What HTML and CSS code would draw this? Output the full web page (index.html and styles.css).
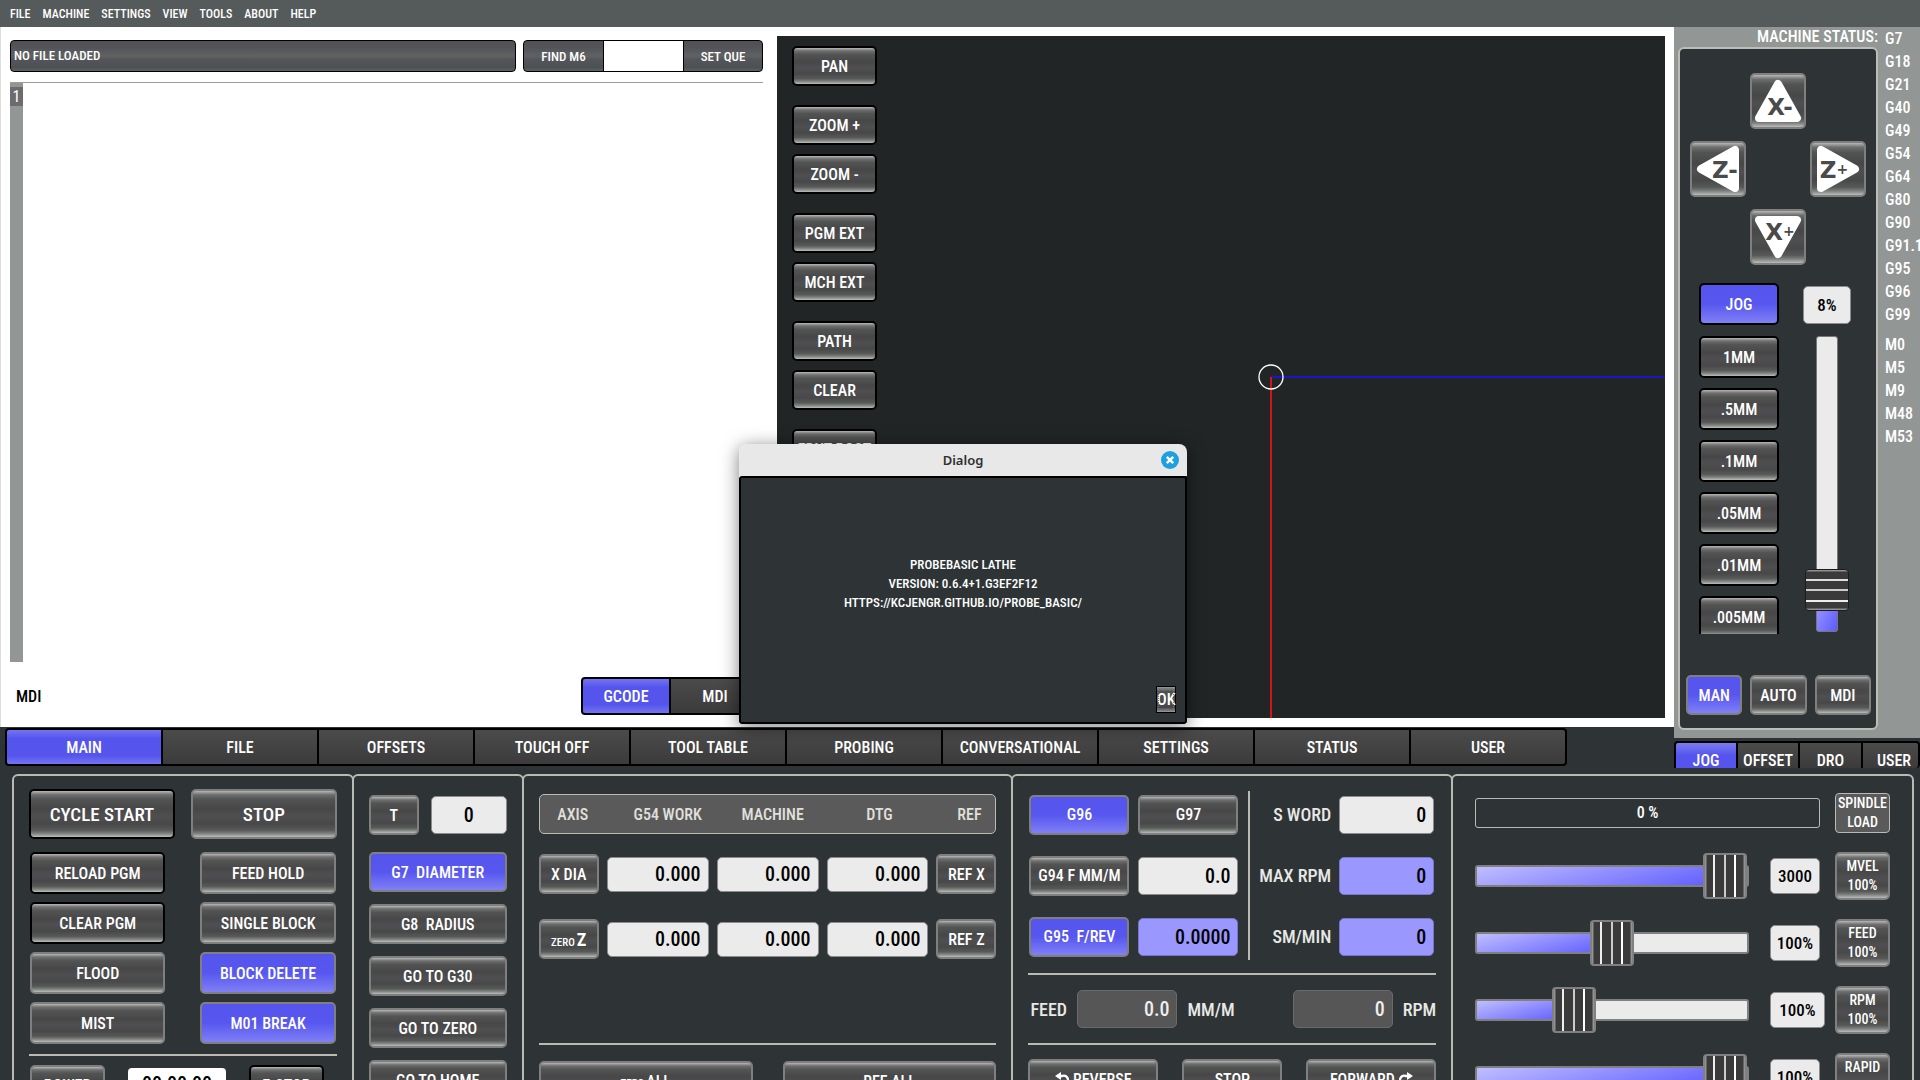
FILE: index.html
```html
<!DOCTYPE html>
<html lang="en">
<head>
    <meta charset="UTF-8">
    <meta name="viewport" content="width=device-width, initial-scale=1.0">
    <title>ProbeBasic Lathe</title>
    <link rel="stylesheet" href="styles.css">
</head>
<body>
    <nav class="menu-bar">
        <a href="#">FILE</a>
        <a href="#">MACHINE</a>
        <a href="#">SETTINGS</a>
        <a href="#">VIEW</a>
        <a href="#">TOOLS</a>
        <a href="#">ABOUT</a>
        <a href="#">HELP</a>
    </nav>

    <main class="upper">
        <div class="left-side">
            <div class="workspace">
                <section class="editor">
                    <div class="file-row">
                        <div class="file-name">NO FILE LOADED</div>
                        <div class="find-group">
                            <button type="button">FIND M6</button>
                            <input type="text" aria-label="Tool number">
                            <button type="button">SET QUE</button>
                        </div>
                    </div>
                    <div class="code-view">
                        <div class="gutter"><span>1</span></div>
                    </div>
                    <div class="mdi-row">
                        <label for="mdi">MDI</label>
                        <input type="text" id="mdi" class="mdi-input">
                        <div class="mode-switch">
                            <button type="button" class="active">GCODE</button>
                            <button type="button">MDI</button>
                        </div>
                    </div>
                </section>

                <section class="plot">
                    <div class="plot-buttons">
                        <button type="button" class="btn dark">PAN</button>
                        <button type="button" class="btn dark group-start">ZOOM +</button>
                        <button type="button" class="btn dark">ZOOM -</button>
                        <button type="button" class="btn dark group-start">PGM EXT</button>
                        <button type="button" class="btn dark">MCH EXT</button>
                        <button type="button" class="btn dark group-start">PATH</button>
                        <button type="button" class="btn dark">CLEAR</button>
                        <button type="button" class="btn dark group-start">FRNT POST</button>
                    </div>
                    <svg class="axes" viewBox="0 0 788 682" preserveAspectRatio="xMidYMid slice">
                        <line x1="394" y1="341" x2="800" y2="341" stroke="#1717c8" stroke-width="2"/>
                        <line x1="394" y1="341" x2="394" y2="700" stroke="#d01717" stroke-width="2"/>
                        <circle cx="394" cy="341" r="12" fill="none" stroke="#ffffff" stroke-width="1.3"/>
                    </svg>
                </section>
            </div>

            <nav class="main-tabs">
                <button type="button" class="active">MAIN</button>
                <button type="button">FILE</button>
                <button type="button">OFFSETS</button>
                <button type="button">TOUCH OFF</button>
                <button type="button">TOOL TABLE</button>
                <button type="button">PROBING</button>
                <button type="button">CONVERSATIONAL</button>
                <button type="button">SETTINGS</button>
                <button type="button">STATUS</button>
                <button type="button">USER</button>
            </nav>
        </div>

        <aside class="right-side">
            <div class="machine">
                <div class="machine-col">
                    <div class="status-title">MACHINE STATUS:</div>
                    <div class="jog-frame">
                        <div class="jog-pad">
                            <button type="button" class="btn jog-up" aria-label="X minus">
                                <svg viewBox="0 0 52 52">
                                    <path d="M26 9 L45 43 H7 Z" fill="#fff" stroke="#fff" stroke-width="8" stroke-linejoin="round"/>
                                    <text x="28" y="40" class="jog-letter">X-</text>
                                </svg>
                            </button>
                            <button type="button" class="btn jog-left" aria-label="Z minus">
                                <svg viewBox="0 0 52 52">
                                    <path d="M9 26 L43 7 V45 Z" fill="#fff" stroke="#fff" stroke-width="8" stroke-linejoin="round"/>
                                    <text x="33" y="35" class="jog-letter">Z-</text>
                                </svg>
                            </button>
                            <button type="button" class="btn jog-right" aria-label="Z plus">
                                <svg viewBox="0 0 52 52">
                                    <path d="M43 26 L9 7 V45 Z" fill="#fff" stroke="#fff" stroke-width="8" stroke-linejoin="round"/>
                                    <text x="22" y="35" class="jog-letter">Z<tspan class="plus" dy="-4">+</tspan></text>
                                </svg>
                            </button>
                            <button type="button" class="btn jog-down" aria-label="X plus">
                                <svg viewBox="0 0 52 52">
                                    <path d="M26 43 L45 9 H7 Z" fill="#fff" stroke="#fff" stroke-width="8" stroke-linejoin="round"/>
                                    <text x="28" y="29" class="jog-letter">X<tspan class="plus" dy="-4">+</tspan></text>
                                </svg>
                            </button>
                        </div>
                        <div class="jog-steps">
                            <div class="step-list">
                                <button type="button" class="btn dark active">JOG</button>
                                <button type="button" class="btn dark">1MM</button>
                                <button type="button" class="btn dark">.5MM</button>
                                <button type="button" class="btn dark">.1MM</button>
                                <button type="button" class="btn dark">.05MM</button>
                                <button type="button" class="btn dark">.01MM</button>
                                <button type="button" class="btn dark">.005MM</button>
                            </div>
                            <div class="jog-speed">
                                <output class="readout" for="jog-speed">8%</output>
                                <input type="range" id="jog-speed" class="slider-v" min="0" max="100" value="8" aria-label="Jog speed">
                            </div>
                        </div>
                        <div class="mode-row">
                            <button type="button" class="btn active">MAN</button>
                            <button type="button" class="btn">AUTO</button>
                            <button type="button" class="btn">MDI</button>
                        </div>
                    </div>
                </div>
                <ul class="codes">
                    <li>G7</li>
                    <li>G18</li>
                    <li>G21</li>
                    <li>G40</li>
                    <li>G49</li>
                    <li>G54</li>
                    <li>G64</li>
                    <li>G80</li>
                    <li>G90</li>
                    <li>G91.1</li>
                    <li>G95</li>
                    <li>G96</li>
                    <li>G99</li>
                    <li class="m-start">M0</li>
                    <li>M5</li>
                    <li>M9</li>
                    <li>M48</li>
                    <li>M53</li>
                </ul>
            </div>
            <nav class="side-tabs">
                <button type="button" class="active">JOG</button>
                <button type="button">OFFSET</button>
                <button type="button">DRO</button>
                <button type="button">USER</button>
            </nav>
        </aside>
    </main>

    <div class="panels">
        <section class="panel program">
            <div class="cycle-row">
                <button type="button" class="btn dark big">CYCLE START</button>
                <button type="button" class="btn big">STOP</button>
            </div>
            <div class="program-grid">
                <button type="button" class="btn dark">RELOAD PGM</button>
                <button type="button" class="btn">FEED HOLD</button>
                <button type="button" class="btn dark">CLEAR PGM</button>
                <button type="button" class="btn">SINGLE BLOCK</button>
                <button type="button" class="btn">FLOOD</button>
                <button type="button" class="btn active">BLOCK DELETE</button>
                <button type="button" class="btn">MIST</button>
                <button type="button" class="btn active">M01 BREAK</button>
            </div>
            <hr>
            <div class="power-row">
                <button type="button" class="btn">POWER</button>
                <output class="timer">00:00:00</output>
                <button type="button" class="btn dark">E-STOP</button>
            </div>
        </section>

        <section class="panel tool">
            <div class="tool-row">
                <button type="button" class="btn">T</button>
                <input type="text" class="field center" value="0" aria-label="Tool">
            </div>
            <button type="button" class="btn active">G7&nbsp; DIAMETER</button>
            <button type="button" class="btn">G8&nbsp; RADIUS</button>
            <button type="button" class="btn">GO TO G30</button>
            <button type="button" class="btn">GO TO ZERO</button>
            <button type="button" class="btn">GO TO HOME</button>
        </section>

        <section class="panel dro">
            <table class="dro-table">
                <thead>
                    <tr>
                        <th>AXIS</th>
                        <th>G54 WORK</th>
                        <th>MACHINE</th>
                        <th>DTG</th>
                        <th>REF</th>
                    </tr>
                </thead>
                <tbody>
                    <tr>
                        <td><button type="button" class="btn">X DIA</button></td>
                        <td><input type="text" class="field" value="0.000" aria-label="X work"></td>
                        <td><input type="text" class="field" value="0.000" aria-label="X machine"></td>
                        <td><input type="text" class="field" value="0.000" aria-label="X distance to go"></td>
                        <td><button type="button" class="btn">REF X</button></td>
                    </tr>
                    <tr>
                        <td><button type="button" class="btn"><small>ZERO</small><b>Z</b></button></td>
                        <td><input type="text" class="field" value="0.000" aria-label="Z work"></td>
                        <td><input type="text" class="field" value="0.000" aria-label="Z machine"></td>
                        <td><input type="text" class="field" value="0.000" aria-label="Z distance to go"></td>
                        <td><button type="button" class="btn">REF Z</button></td>
                    </tr>
                </tbody>
            </table>
            <hr>
            <div class="all-row">
                <button type="button" class="btn"><small>ZERO</small>ALL</button>
                <button type="button" class="btn">REF ALL</button>
            </div>
        </section>

        <section class="panel spindle">
            <div class="spindle-top">
                <div class="feed-modes">
                    <button type="button" class="btn active">G96</button>
                    <button type="button" class="btn">G97</button>
                    <button type="button" class="btn">G94 F MM/M</button>
                    <input type="text" class="field" value="0.0" aria-label="Feed per minute">
                    <button type="button" class="btn active">G95&nbsp; F/REV</button>
                    <input type="text" class="field violet" value="0.0000" aria-label="Feed per revolution">
                </div>
                <div class="speed-words">
                    <label for="s-word">S WORD</label>
                    <input type="text" id="s-word" class="field" value="0">
                    <label for="max-rpm">MAX RPM</label>
                    <input type="text" id="max-rpm" class="field violet" value="0">
                    <label for="sm-min">SM/MIN</label>
                    <input type="text" id="sm-min" class="field violet" value="0">
                </div>
            </div>
            <hr>
            <div class="actual-row">
                <label for="feed" class="feed-label">FEED</label>
                <input type="text" id="feed" class="field gray" value="0.0" readonly>
                <span>MM/M</span>
                <input type="text" id="rpm" class="field gray rpm" value="0" readonly>
                <label for="rpm">RPM</label>
            </div>
            <hr>
            <div class="spindle-buttons">
                <button type="button" class="btn">
                    <svg viewBox="0 0 14 16"><path d="M2 4 H7 A4.5 4.5 0 0 1 11 12 L9 14" fill="none" stroke="#fff" stroke-width="2.4"/><path d="M0 4 L6 0 V8 Z" fill="#fff"/></svg>
                    REVERSE
                </button>
                <button type="button" class="btn">STOP</button>
                <button type="button" class="btn">
                    FORWARD
                    <svg viewBox="0 0 14 16"><path d="M12 4 H7 A4.5 4.5 0 0 0 3 12 L5 14" fill="none" stroke="#fff" stroke-width="2.4"/><path d="M14 4 L8 0 V8 Z" fill="#fff"/></svg>
                </button>
            </div>
        </section>

        <section class="panel overrides">
            <div class="load-row">
                <div class="load-bar">0 %</div>
                <div class="load-label">SPINDLE<br>LOAD</div>
            </div>
            <div class="override">
                <input type="range" class="slider" min="0" max="100" value="100" style="--value: 1" aria-label="Max velocity">
                <output class="readout">3000</output>
                <button type="button" class="btn">MVEL<br>100%</button>
            </div>
            <div class="override">
                <input type="range" class="slider" min="0" max="100" value="50" style="--value: 0.5" aria-label="Feed override">
                <output class="readout">100%</output>
                <button type="button" class="btn">FEED<br>100%</button>
            </div>
            <div class="override">
                <input type="range" class="slider" min="0" max="100" value="33" style="--value: 0.33" aria-label="Spindle override">
                <output class="readout wide">100%</output>
                <button type="button" class="btn">RPM<br>100%</button>
            </div>
            <div class="override">
                <input type="range" class="slider" min="0" max="100" value="100" style="--value: 1" aria-label="Rapid override">
                <output class="readout">100%</output>
                <button type="button" class="btn">RAPID<br>100%</button>
            </div>
        </section>
    </div>

    <div class="dialog" role="dialog" aria-labelledby="dialog-title">
        <div class="dialog-title">
            <span id="dialog-title">Dialog</span>
            <button type="button" class="dialog-close" aria-label="Close">
                <svg viewBox="0 0 18 18">
                    <circle cx="9" cy="9" r="9" fill="#1e9fe0"/>
                    <path d="M5.8 5.8 L12.2 12.2 M12.2 5.8 L5.8 12.2" stroke="#fff" stroke-width="2.4"/>
                </svg>
            </button>
        </div>
        <div class="dialog-body">
            <p>PROBEBASIC LATHE<br>VERSION: 0.6.4+1.G3EF2F12<br>HTTPS://KCJENGR.GITHUB.IO/PROBE_BASIC/</p>
            <button type="button" class="dialog-ok">OK</button>
        </div>
    </div>
</body>
</html>
```
FILE: styles.css
```css
* {
    margin: 0;
    padding: 0;
    box-sizing: border-box;
}

body {
    height: 100vh;
    overflow: hidden;
    background: #2e3436;
    color: white;
    font-family: "Roboto Condensed", "Liberation Sans Narrow", "DejaVu Sans Condensed", sans-serif;
    font-size: 16px;
    font-weight: 500;
}

button,
input {
    font: inherit;
    color: inherit;
}

button {
    white-space: nowrap;
    cursor: pointer;
}

input {
    min-width: 0;
    border: none;
    outline: none;
}

hr {
    height: 2px;
    border: none;
    background: #b9bab2;
}

/* shared controls */

.btn {
    height: 40px;
    border: 2px solid #7f7f7f;
    border-radius: 5px;
    background: linear-gradient(#b6b8b6 0%, #6e6f6e 8%, #525453 18%, #484748 38%, #4f4e50 55%, #484849 72%, #575958 85%, #7c7e7c 92%, #babdba 100%);
}

.btn.dark {
    border-color: #000;
}

.btn.active {
    background: linear-gradient(#5555ee 0%, #5757ef 50%, #8080f6 100%);
}

.field {
    width: 100%;
    height: 38px;
    padding: 0 7px;
    border: 1px solid #8c8c8c;
    border-radius: 5px;
    background: #ebebeb;
    color: #000;
    font-size: 20px;
    text-align: right;
}

.field.center {
    text-align: center;
}

.field.violet {
    background: #9a97ff;
    border-color: #7775c8;
}

.field.gray {
    background: #565656;
    border-color: #6a6a6a;
    color: #eeeeec;
}

.readout {
    display: flex;
    align-items: center;
    justify-content: center;
    width: 50px;
    height: 36px;
    border: 1px solid #8c8c8c;
    border-radius: 5px;
    background: #ebebeb;
    color: #000;
    font-size: 17px;
}

.readout.wide {
    width: 55px;
}

/* menu */

.menu-bar {
    display: flex;
    align-items: center;
    gap: 12px;
    height: 27px;
    padding: 0 10px;
    background: #555a5a;
    font-size: 12px;
}

.menu-bar a {
    color: white;
    text-decoration: none;
}

/* upper area */

.upper {
    display: flex;
    height: 741px;
}

.left-side {
    flex: 1;
    display: flex;
    flex-direction: column;
}

.workspace {
    flex: 1;
    display: flex;
    gap: 14px;
    padding: 9px;
    border-left: 1px solid #ddd;
    background: white;
}

.editor {
    flex: 753;
    display: flex;
    flex-direction: column;
    padding-top: 4px;
}

.file-row {
    display: flex;
    gap: 7px;
    height: 32px;
    font-size: 13px;
}

.file-name,
.find-group {
    border: 1px solid #000;
    border-radius: 4px;
    background: linear-gradient(#4f5154 0%, #54555a 25%, #606262 50%, #54555a 62%, #4b5153 88%, #5d6262 100%);
}

.file-name {
    flex: 1;
    padding-left: 3px;
    line-height: 30px;
}

.find-group {
    display: grid;
    grid-template-columns: 79px 81px 78px;
}

.find-group button {
    border: none;
    background: none;
}

.find-group input {
    border: 1px solid #000;
    border-width: 0 1px;
    background: white;
    color: #000;
}

.code-view {
    flex: 1;
    display: flex;
    margin-top: 10px;
    border-top: 1px solid #9c9c9c;
}

.gutter {
    width: 13px;
    padding-top: 4px;
    background: #929694;
}

.gutter span {
    display: block;
    height: 19px;
    background: #6c6c6c;
    line-height: 19px;
    text-align: center;
    font-weight: normal;
}

.mdi-row {
    display: flex;
    align-items: center;
    height: 38px;
    margin: 15px 2px 3px 6px;
    color: #000;
}

.mdi-input {
    flex: 1;
    background: white;
}

.mode-switch {
    display: grid;
    grid-template-columns: 88px 88px;
    border: 2px solid #000;
    border-radius: 4px;
    overflow: hidden;
    background: #000;
}

.mode-switch button {
    height: 34px;
    border: none;
    background: linear-gradient(#4b4b4b, #3b3b3b);
    color: white;
}

.mode-switch .active {
    margin-right: 2px;
    background: linear-gradient(#7474f2 0%, #5555ee 25%, #5555ee 75%, #7474f2 100%);
}

.plot {
    flex: 872;
    display: flex;
    padding-left: 15px;
    background: #212526;
}

.plot-buttons {
    display: flex;
    flex-direction: column;
    gap: 9px;
    width: 85px;
    padding-top: 10px;
}

.plot-buttons .group-start {
    margin-top: 10px;
}

.axes {
    flex: 1;
    min-width: 0;
    height: 100%;
}

.main-tabs,
.side-tabs {
    flex: none;
    display: grid;
    gap: 2px;
    border: 2px solid #000;
    border-radius: 4px;
    background: #000;
    overflow: hidden;
}

.main-tabs {
    grid-template-columns: repeat(10, 1fr);
    margin: 1px 107px 2px 5px;
}

.main-tabs button,
.side-tabs button {
    border: none;
    background: linear-gradient(#4b4b4b, #3b3b3b);
}

.main-tabs button {
    height: 34px;
}

.main-tabs .active {
    background: linear-gradient(#7474f2 0%, #5555ee 25%, #5555ee 75%, #7474f2 100%);
}

/* right side */

.right-side {
    width: 246px;
    display: flex;
    flex-direction: column;
    overflow: hidden;
}

.machine {
    flex: 1;
    display: flex;
    gap: 7px;
    padding: 0 0 8px 4px;
    background: #929694;
}

.machine-col {
    flex: none;
    width: 200px;
    display: flex;
    flex-direction: column;
}

.status-title {
    height: 20px;
    line-height: 20px;
    text-align: right;
}

.jog-frame {
    flex: 1;
    display: flex;
    flex-direction: column;
    border: 2px solid #bcbeb6;
    border-radius: 6px;
    background: #2e3436;
}

.jog-pad {
    display: grid;
    grid-template-columns: repeat(3, 56px);
    grid-template-rows: repeat(3, 56px);
    gap: 12px 4px;
    padding: 24px 0 18px 10px;
}

.jog-pad .btn {
    height: 56px;
}

.jog-pad svg {
    display: block;
    width: 52px;
    height: 52px;
}

.jog-up {
    grid-area: 1 / 2;
}

.jog-left {
    grid-area: 2 / 1;
}

.jog-right {
    grid-area: 2 / 3;
}

.jog-down {
    grid-area: 3 / 2;
}

.jog-letter {
    font-family: "DejaVu Sans", sans-serif;
    font-size: 23px;
    font-weight: bold;
    fill: #4a4a4a;
    text-anchor: middle;
}

.jog-letter .plus {
    font-size: 14px;
}

.jog-steps {
    display: flex;
    justify-content: space-between;
    height: 351px;
    padding: 0 25px 0 19px;
    overflow: hidden;
}

.step-list {
    display: flex;
    flex-direction: column;
    gap: 10px;
    width: 80px;
}

.step-list .btn {
    flex: none;
    height: 42px;
}

.step-list .active {
    margin-bottom: 1px;
}

.jog-speed {
    display: flex;
    flex-direction: column;
    align-items: center;
    gap: 12px;
    padding-top: 3px;
}

.jog-speed .readout {
    width: 48px;
    height: 38px;
}

.slider-v {
    writing-mode: vertical-lr;
    direction: rtl;
    appearance: none;
    width: 22px;
    height: 296px;
    border: 1px solid #777;
    border-radius: 3px;
    background: linear-gradient(115deg, #a5a3ff, #5c5aff) bottom / 100% 42px no-repeat #ebebeb;
}

.slider-v::-webkit-slider-runnable-track {
    width: 20px;
}

.slider-v::-webkit-slider-thumb {
    appearance: none;
    width: 44px;
    height: 42px;
    margin-left: -12px;
    border: 1px solid #1c1c1c;
    border-radius: 4px;
    background:
        linear-gradient(#ddd, #ddd) 0 9px / 100% 2px no-repeat,
        linear-gradient(#ccc, #ccc) 0 19px / 100% 2px no-repeat,
        linear-gradient(#eee, #eee) 0 30px / 100% 2px no-repeat,
        linear-gradient(#aaa 0%, #3a3a3a 6%, #3a3a3a 94%, #aaa 100%);
}

.mode-row {
    display: grid;
    grid-template-columns: repeat(3, 1fr);
    gap: 8px;
    margin-top: auto;
    padding: 0 5px 13px 6px;
}

.codes {
    list-style: none;
}

.codes li {
    height: 23px;
    line-height: 23px;
}

.codes .m-start {
    margin-top: 7px;
}

.side-tabs {
    grid-template-columns: 60px 60px 61px 62px;
    margin-top: 3px;
    border-bottom: none;
    border-bottom-left-radius: 0;
}

.side-tabs button {
    height: 25px;
    padding-top: 8px;
    overflow: hidden;
}

.side-tabs .active {
    background: linear-gradient(#7b7bf0 0%, #5555ee 50%);
}

/* lower panels */

.panels {
    display: grid;
    grid-template-columns: 340fr 170fr 490fr 440fr 461fr;
    padding: 6px 6px 0 14px;
}

.panel {
    height: 400px;
    margin-left: -2px;
    border: 2px solid #b9bab2;
    border-radius: 6px;
}

.program {
    padding: 13px 15px;
}

.cycle-row {
    display: grid;
    grid-template-columns: 1fr 1fr;
    gap: 16px;
}

.big {
    height: 50px;
    font-size: 19px;
}

.program-grid {
    display: grid;
    grid-template-columns: 1fr 1fr;
    gap: 8px 35px;
    margin: 13px 1px 10px;
}

.program-grid .btn {
    height: 42px;
}

.power-row {
    display: grid;
    grid-template-columns: 75px 98px 75px;
    gap: 23px;
    margin: 9px 1px;
}

.timer {
    height: 38px;
    margin-top: 3px;
    border-radius: 4px;
    background: white;
    color: #000;
    font-size: 20px;
    line-height: 32px;
    text-align: center;
}

.tool {
    display: flex;
    flex-direction: column;
    gap: 12px;
    padding: 19px 15px;
}

.tool .btn {
    flex: none;
}

.tool-row {
    display: grid;
    grid-template-columns: 50px 76px;
    align-items: center;
    justify-content: space-between;
    margin-bottom: 5px;
}

.dro {
    padding: 18px 15px;
}

.dro-table,
.dro-table thead,
.dro-table tbody {
    display: block;
}

.dro-table tr {
    display: grid;
    grid-template-columns: 60px 1fr 1fr 1fr 60px;
    align-items: center;
    gap: 8px;
}

.dro-table thead tr {
    grid-template-columns: 66fr 124fr 86fr 128fr 52fr;
    gap: 0;
    height: 40px;
    border: 1px solid #b9bab2;
    border-radius: 5px;
    background: #5a5a5a;
    color: #e0e0dc;
}

.dro-table th {
    font-weight: 500;
}

.dro-table tbody tr {
    margin-top: 20px;
    height: 40px;
}

.dro-table tbody tr + tr {
    margin-top: 25px;
}

.dro-table .btn {
    width: 100%;
}

.dro-table td .field {
    display: block;
    height: 35px;
}

.btn small {
    margin-right: 2px;
    font-size: 11px;
}

.btn b {
    font-size: 18px;
}

.dro hr {
    margin: 84px 0 16px;
}

.all-row {
    display: grid;
    grid-template-columns: 1fr 1fr;
    gap: 30px;
}

.spindle {
    padding: 15px;
}

.spindle-top {
    display: grid;
    grid-template-columns: 222px 1fr;
}

.feed-modes,
.speed-words {
    display: grid;
    grid-auto-rows: 40px;
    align-items: center;
    align-content: center;
    row-gap: 21px;
}

.feed-modes {
    grid-template-columns: 100px 100px;
    column-gap: 9px;
    height: 169px;
    padding-left: 1px;
    border-right: 2px solid #b9bab2;
}

.speed-words {
    grid-template-columns: 1fr 95px;
    column-gap: 8px;
    padding-right: 2px;
    color: #e8e8e4;
    font-size: 18px;
    text-align: right;
}

.spindle hr {
    margin-top: 13px;
}

.actual-row {
    display: flex;
    align-items: center;
    gap: 10px;
    margin-top: 15px;
    padding-left: 2px;
    color: #e8e8e4;
    font-size: 18px;
}

.feed-label {
    width: 37px;
}

.actual-row .field {
    width: 100px;
}

.actual-row .rpm {
    margin-left: auto;
}

.spindle .actual-row + hr {
    margin-top: 15px;
}

.spindle-buttons {
    display: grid;
    grid-template-columns: 130px 100px 130px;
    justify-content: space-between;
    margin-top: 14px;
}

.spindle-buttons svg {
    width: 14px;
    height: 16px;
    vertical-align: -3px;
}

.overrides {
    padding: 17px 22px;
}

.load-row {
    display: flex;
    align-items: center;
    gap: 15px;
    margin-bottom: 19px;
}

.load-bar {
    flex: 1;
    height: 30px;
    border: 1px solid #b9bab2;
    border-radius: 3px;
    line-height: 28px;
    text-align: center;
}

.load-label {
    width: 55px;
    height: 40px;
    border: 1px solid #b9bab2;
    border-radius: 4px;
    background: #5a5a5a;
    font-size: 14px;
    line-height: 19px;
    text-align: center;
}

.override {
    display: grid;
    grid-template-columns: 1fr 50px 55px;
    align-items: center;
    margin-bottom: 19px;
    column-gap: 15px;
}

.override .btn {
    height: 48px;
    font-size: 14px;
    line-height: 19px;
}

.slider {
    appearance: none;
    height: 22px;
    margin-right: 6px;
    border: 2px solid #808080;
    border-radius: 3px;
    background: linear-gradient(165deg, #c0beff, #5c5aff) 0 0 / calc(22px + (100% - 44px) * var(--value)) 100% no-repeat #ebebeb;
}

.slider::-webkit-slider-runnable-track {
    height: 18px;
}

.slider::-webkit-slider-thumb {
    appearance: none;
    width: 44px;
    height: 46px;
    margin-top: -14px;
    border: 2px solid #808080;
    border-radius: 4px;
    background:
        linear-gradient(#eee, #eee) 8px 0 / 2px 100% no-repeat,
        linear-gradient(#ccc, #ccc) 19px 0 / 2px 100% no-repeat,
        linear-gradient(#fff, #fff) 29px 0 / 2px 100% no-repeat,
        linear-gradient(90deg, #aaa 0%, #3a3a3a 6%, #3a3a3a 94%, #aaa 100%);
}

/* about dialog */

.dialog {
    position: absolute;
    top: 444px;
    left: 50%;
    width: 448px;
    margin-left: -221px;
    border-radius: 8px 8px 0 0;
    box-shadow: 0 3px 18px rgba(0, 0, 0, 0.5);
}

.dialog-title {
    display: flex;
    align-items: center;
    height: 32px;
    padding: 0 8px 0 26px;
    border-radius: 8px 8px 0 0;
    background: #e8e8e8;
    color: #303030;
    font-family: "Noto Sans", sans-serif;
    font-size: 13px;
    font-weight: 600;
}

.dialog-title span {
    flex: 1;
    text-align: center;
}

.dialog-close {
    width: 18px;
    height: 18px;
    border: none;
    background: none;
}

.dialog-close svg {
    display: block;
}

.dialog-body {
    display: flex;
    flex-direction: column;
    height: 248px;
    padding: 77px 9px 9px;
    border: 2px solid #000;
    border-radius: 3px;
    background: #2e3436;
}

.dialog-body p {
    font-size: 13px;
    line-height: 19px;
    text-align: center;
}

.dialog-ok {
    align-self: flex-end;
    width: 20px;
    height: 27px;
    margin-top: auto;
    border: 1px solid #000;
    outline: 1px dotted #777;
    outline-offset: -3px;
    background: linear-gradient(#9a9c9a 0%, #505152 18%, #484748 82%, #9a9c9a 100%);
}
```
